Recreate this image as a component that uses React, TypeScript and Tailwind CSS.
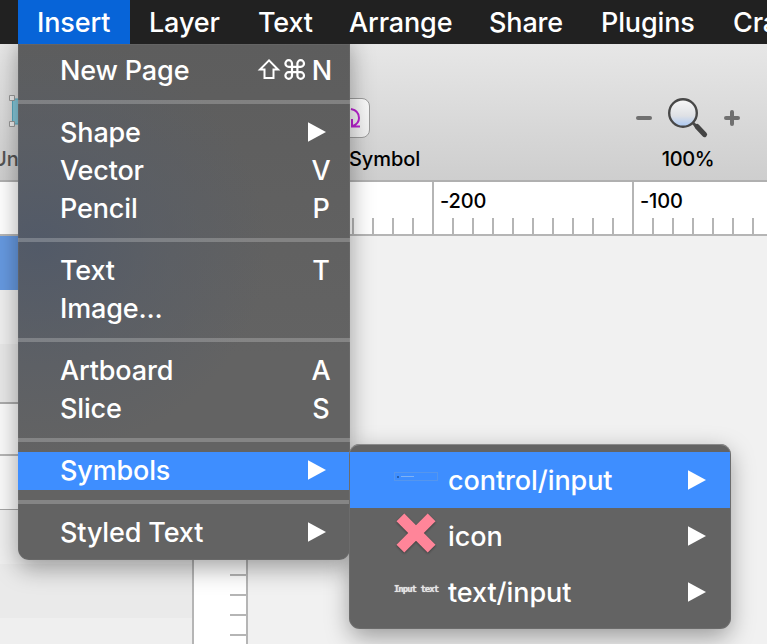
import React from 'react';
import clsx from 'clsx';

const menuBar = [
  { label: 'Insert', className: 'w-[112px] bg-[#0764d8]' },
  { label: 'Layer', className: 'w-[109px]' },
  { label: 'Text', className: 'w-[91px]' },
  { label: 'Arrange', className: 'w-[140px]' },
  { label: 'Share', className: 'w-[112px]' },
  { label: 'Plugins', className: 'w-[132px]' },
  { label: 'Craft', className: 'w-[110px]' },
];

type Item = { label: string; shortcut?: string; submenu?: boolean; active?: boolean };

const insertGroups: Item[][] = [
  [{ label: 'New Page', shortcut: 'N' }],
  [
    { label: 'Shape', submenu: true },
    { label: 'Vector', shortcut: 'V' },
    { label: 'Pencil', shortcut: 'P' },
  ],
  [{ label: 'Text', shortcut: 'T' }, { label: 'Image...' }],
  [
    { label: 'Artboard', shortcut: 'A' },
    { label: 'Slice', shortcut: 'S' },
  ],
  [{ label: 'Symbols', submenu: true, active: true }],
  [{ label: 'Styled Text', submenu: true }],
];

const Arrow: React.FC = () => (
  <svg width="18" height="20" viewBox="0 0 18 20" className="shrink-0" fill="#fff">
    <path d="M0 .2 18 10 0 19.8z" />
  </svg>
);

const Modifiers: React.FC = () => (
  <svg width="50" height="24" viewBox="0 0 50 24" fill="none" stroke="#fff" strokeWidth="2.200" className="mr-[4px] shrink-0">
    <path d="M12 1.400 3 10.500h4.500v8.500h9v-8.500H21z" strokeWidth="2" />
    <path d="M35 6.500v-2a3.300 3.300 0 1 0-3.300 3.300h12a3.300 3.300 0 1 0-3.300-3.300v12a3.300 3.300 0 1 0 3.300-3.300h-12a3.300 3.300 0 1 0 3.300 3.300z" />
  </svg>
);

const MenuRow: React.FC<{ item: Item }> = ({ item }) => (
  <div
    className={clsx(
      'flex h-[38px] items-center justify-between pl-[42px]',
      item.submenu ? 'pr-[24px]' : item.label === 'New Page' ? 'pr-[17px]' : 'pr-[18px]',
      item.active && 'bg-[#3e8eff]'
    )}
  >
    <span>{item.label}</span>
    {item.submenu && (
      <span className="pb-[2px]">
        <Arrow />
      </span>
    )}
    {item.shortcut && (
      <span className="flex items-center">
        {item.label === 'New Page' && <Modifiers />}
        <span className="w-[22px] text-center">{item.shortcut}</span>
      </span>
    )}
  </div>
);

const InsertMenu: React.FC = () => (
  <div className="absolute left-[18px] top-[44px] h-[516px] w-[332px] overflow-hidden rounded-b-[11px] bg-[#636363] bg-[radial-gradient(ellipse_230px_210px_at_20px_200px,#525a68_0%,#575d6799_50%,#63636300_100%),linear-gradient(#5d5d5d,#636363_60%)] py-2 shadow-[inset_0_0_0_1px_#7d7d7d40]">
    {insertGroups.map((group, i) => (
      <div key={i}>
        {i > 0 && <div className="my-[10px] h-1 bg-white/22" />}
        {group.map((item) => (
          <MenuRow key={item.label} item={item} />
        ))}
      </div>
    ))}
  </div>
);

const InputThumb: React.FC = () => (
  <div className="mb-[1px] flex h-[9px] w-[44px] items-center border border-[#5596ee] pl-[2px]">
    <div className="h-[2px] w-[2px] bg-[#245fae]" />
    <div className="ml-[2px] h-px w-[13px] bg-[#7fb2f5]" />
  </div>
);

const CrossThumb: React.FC = () => (
  <svg width="44" height="44" viewBox="0 0 44 44" className="drop-shadow-[0_1px_1px_#00000060]">
    <path
      d="M10.300 2.500 22 14.200 33.700 2.500 41.500 10.300 29.800 22 41.500 33.700 33.700 41.500 22 29.800 10.300 41.500 2.500 33.700 14.200 22 2.500 10.300z"
      fill="#ff8599"
    />
  </svg>
);

const symbols = [
  { label: 'control/input', thumb: <InputThumb />, active: true },
  { label: 'icon', thumb: <CrossThumb /> },
  {
    label: 'text/input',
    thumb: (
      <span className="whitespace-nowrap font-['DejaVu_Sans_Mono',monospace] text-[9px] leading-3 font-black tracking-[-1px] text-[#e4e4e4] [text-shadow:0_0_1px_#ddd]">
        Input text
      </span>
    ),
  },
];

const SymbolsMenu: React.FC = () => (
  <div className="absolute left-[349px] top-[444px] h-[185px] w-[382px] overflow-hidden rounded-[11px] bg-[#636363] py-2 shadow-[inset_0_1px_0_#8a8a8a,inset_0_0_0_1px_#7d7d7d60]">
    {symbols.map((s) => (
      <div key={s.label} className={clsx('mx-px flex h-14 items-center pl-[44px] pr-[24px]', s.active && 'bg-[#3e8eff]')}>
        <div className="flex h-11 w-11 shrink-0 items-center justify-center pb-[6px]">{s.thumb}</div>
        <span className="ml-[10px] flex-1 pt-[2px] tracking-[-0.08px]">{s.label}</span>
        <Arrow />
      </div>
    ))}
  </div>
);

const Magnifier: React.FC = () => (
  <svg width="42" height="42" viewBox="0 0 42 42">
    <defs>
      <linearGradient id="lens" x1="0" y1="0" x2="0" y2="1">
        <stop offset="0" stopColor="#f8f8f8" />
        <stop offset=".6" stopColor="#dfe1e5" />
        <stop offset="1" stopColor="#a9c8f5" />
      </linearGradient>
    </defs>
    <path d="m26 26 4 4" stroke="#484848" strokeWidth="3" />
    <path d="m30 29.500 7.500 8" stroke="#444" strokeWidth="5.200" strokeLinecap="round" />
    <circle cx="16" cy="16" r="13.800" fill="url(#lens)" stroke="#484848" strokeWidth="2.400" />
  </svg>
);

const Toolbar: React.FC = () => (
  <div className="flex h-[138px] justify-between border-b-2 border-[#b0b0b0] bg-linear-to-b from-[#e7e7e7] to-[#cecece] pt-[54px] text-[20px] leading-6 text-black">
    <div className="flex">
      <div className="w-[330px]">
        <svg width="30" height="42" viewBox="0 0 30 42" className="mt-[-4px]">
          <path d="M12.500 5h20v25h-20z" fill="#86c8da" stroke="#58a9bf" />
          <path d="M9.500 1.500h5v5h-5zM9.500 27.500h5v5h-5z" fill="#eee" stroke="#999" />
        </svg>
        <div className="ml-[-8px] mt-[11px] text-[#555]">Union</div>
      </div>
      <div className="w-[100px]">
        <div className="flex h-[40px] w-[40px] items-center justify-end rounded-[8px] border border-[#9c9c9c] bg-linear-to-b from-[#fafafa] to-[#efefef] pr-[8px]">
          <svg width="12" height="22" viewBox="0 0 12 22" fill="none" stroke="#b923d0" strokeWidth="2">
            <path d="M2 2C7 3 10 6.500 10 11c0 4-2.500 6.500-6 8M3 12v7.500H11" />
          </svg>
        </div>
        <div className="ml-[19px] mt-[9px] tracking-[-0.1px]">Symbol</div>
      </div>
    </div>
    <div className="mr-[27px] w-[104px]">
      <div className="flex h-[40px] items-center justify-between">
        <div className="h-1 w-4 rounded-full bg-[#707070]" />
        <Magnifier />
        <svg width="16" height="16" viewBox="0 0 16 16" stroke="#707070" strokeWidth="4" strokeLinecap="round">
          <path d="M2 8h12M8 2v12" />
        </svg>
      </div>
      <div className="mt-[9px] text-center tracking-[-0.4px]">100%</div>
    </div>
  </div>
);

// divisions left of -200 are covered by the open menu and carry no label
const divisions = ['', '', '-200', '-100'];

const HorizontalRuler: React.FC = () => (
  <div className="flex h-[54px] overflow-hidden border-b-2 border-[#b5b5b5] bg-white pl-[32px] text-[20px] leading-6 text-black">
    {divisions.map((label, n) => (
      <div key={n} className="flex w-[200px] shrink-0 flex-col justify-between border-l-2 border-[#b5b5b5]">
        <div className="h-[31px] pl-[6px] pt-[7px]">{label}</div>
        <div className="flex h-4 gap-[18px] pl-[18px]">
          {Array.from({ length: 9 }, (_, i) => (
            <div key={i} className="w-[2px] bg-[#b5b5b5]" />
          ))}
        </div>
      </div>
    ))}
  </div>
);

const Sidebar: React.FC = () => (
  <div className="w-[194px] border-r-2 border-[#b5b5b5] bg-[#efefef]">
    <div className="h-[54px] bg-[#6699e0]" />
    <div className="h-[54px] bg-[#efefef]" />
    <div className="h-[60px] border-b-2 border-[#ababab] bg-[#e8e8e8]" />
    <div className="h-[52px] border-b-2 border-[#b5b5b5] bg-[#fafafa]" />
    <div className="h-[54px] border-b border-[#a5a5a5] bg-[#fafafa]" />
    <div className="h-[54px] bg-[#efefef]" />
    <div className="h-[54px] bg-[#eaeaea]" />
  </div>
);

const VerticalRuler: React.FC = () => (
  <div className="flex w-[54px] flex-col items-end gap-[18px] overflow-hidden border-r-2 border-[#b5b5b5] bg-white pt-[18px]">
    {Array.from({ length: 20 }, (_, i) => (
      <div key={i} className="h-[2px] w-4 shrink-0 bg-[#b5b5b5]" />
    ))}
  </div>
);

const App: React.FC = () => {
  return (
    <div className="relative flex h-[644px] w-[767px] flex-col overflow-hidden bg-[#f1f1f1] font-['Inter','Liberation_Sans',sans-serif] text-[27px] font-[450] tracking-[-0.15px] text-white">
      <div className="flex h-[44px] shrink-0 bg-[#212121] pl-[18px]">
        {menuBar.map((m) => (
          <div key={m.label} className={clsx('flex shrink-0 items-center pl-[19px] pt-[2px]', m.className)}>
            {m.label}
          </div>
        ))}
      </div>
      <Toolbar />
      <HorizontalRuler />
      <div className="flex h-[408px] overflow-hidden">
        <Sidebar />
        <VerticalRuler />
      </div>

      {/* shadows sit below both panels so neither darkens the other's face */}
      <div className="absolute inset-x-0 bottom-0 top-[44px] overflow-hidden">
        <div className="absolute left-[18px] top-[-10px] h-[526px] w-[332px] rounded-[11px] shadow-[0_8px_24px_#0000005c]" />
        <div className="absolute left-[350px] top-[400px] h-[185px] w-[380px] rounded-[11px] shadow-[0_8px_24px_#0000005c]" />
      </div>
      <InsertMenu />
      <SymbolsMenu />
    </div>
  );
};

export default App;
